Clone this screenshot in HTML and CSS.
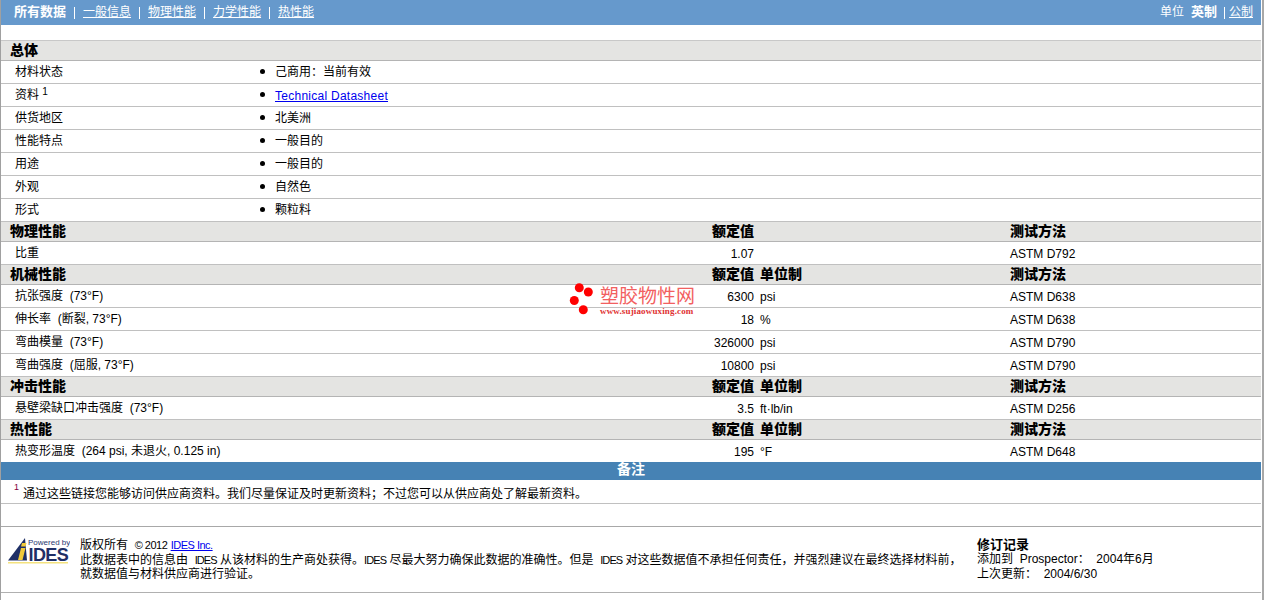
FILE: index.html
```html
<!DOCTYPE html>
<html lang="zh">
<head>
<meta charset="utf-8">
<title>塑胶物性</title>
<link rel="stylesheet" href="styles.css">
</head>
<body>
<div class="page">
  <nav class="topbar">
    <div class="tabs">
      <b>所有数据</b><i class="sep"></i><a href="#">一般信息</a><i class="sep"></i><a href="#">物理性能</a><i class="sep"></i><a href="#">力学性能</a><i class="sep"></i><a href="#">热性能</a>
    </div>
    <div class="units"><span>单位</span><b>英制</b><i class="sep"></i><a href="#">公制</a></div>
  </nav>
  <div class="gap"></div>

  <div class="head"><b class="c1">总体</b></div>
  <div class="row"><span class="c1 ind">材料状态</span><span class="bullet">己商用：当前有效</span></div>
  <div class="row"><span class="c1 ind">资料 <sup>1</sup></span><span class="bullet"><a href="#" class="link wide">Technical Datasheet</a></span></div>
  <div class="row"><span class="c1 ind">供货地区</span><span class="bullet">北美洲</span></div>
  <div class="row"><span class="c1 ind">性能特点</span><span class="bullet">一般目的</span></div>
  <div class="row"><span class="c1 ind">用途</span><span class="bullet">一般目的</span></div>
  <div class="row"><span class="c1 ind">外观</span><span class="bullet">自然色</span></div>
  <div class="row"><span class="c1 ind">形式</span><span class="bullet">颗粒料</span></div>

  <div class="head"><b class="c1">物理性能</b><b class="val">额定值</b><b class="unit"></b><b class="method">测试方法</b></div>
  <div class="row"><span class="c1 ind">比重</span><span class="val">1.07</span><span class="unit"></span><span class="method">ASTM D792</span></div>

  <div class="head"><b class="c1">机械性能</b><b class="val">额定值</b><b class="unit">单位制</b><b class="method">测试方法</b></div>
  <div class="row"><span class="c1 ind">抗张强度&nbsp; (73°F)</span><span class="val">6300</span><span class="unit">psi</span><span class="method">ASTM D638</span></div>
  <div class="row"><span class="c1 ind">伸长率&nbsp; (断裂, 73°F)</span><span class="val">18</span><span class="unit">%</span><span class="method">ASTM D638</span></div>
  <div class="row"><span class="c1 ind">弯曲模量&nbsp; (73°F)</span><span class="val">326000</span><span class="unit">psi</span><span class="method">ASTM D790</span></div>
  <div class="row"><span class="c1 ind">弯曲强度&nbsp; (屈服, 73°F)</span><span class="val">10800</span><span class="unit">psi</span><span class="method">ASTM D790</span></div>

  <div class="head"><b class="c1">冲击性能</b><b class="val">额定值</b><b class="unit">单位制</b><b class="method">测试方法</b></div>
  <div class="row"><span class="c1 ind">悬壁梁缺口冲击强度&nbsp; (73°F)</span><span class="val">3.5</span><span class="unit">ft·lb/in</span><span class="method">ASTM D256</span></div>

  <div class="head"><b class="c1">热性能</b><b class="val">额定值</b><b class="unit">单位制</b><b class="method">测试方法</b></div>
  <div class="row last"><span class="c1 ind">热变形温度&nbsp; (264 psi, 未退火, 0.125 in)</span><span class="val">195</span><span class="unit">°F</span><span class="method">ASTM D648</span></div>

  <div class="notes-title">备注</div>
  <div class="note"><sup class="mark">1</sup><span>通过这些链接您能够访问供应商资料。我们尽量保证及时更新资料；不过您可以从供应商处了解最新资料。</span></div>
  <div class="spacer"></div>

  <footer class="footer">
    <svg class="logo" width="62" height="28" viewBox="0 0 62 28" role="img" aria-label="Powered by IDES">
      <path d="M0 23.500 L17 1 L19 23.500 Z" fill="#1f2f66"/>
      <path d="M14 6 h4.500 l-1 3.500 h-4.500 Z M13 11 h4.500 l-3 12 h-4.500 Z" fill="#f0c93a"/>
      <rect x="0" y="25" width="60" height="1.500" fill="#f4e27e"/>
      <text x="20" y="8" class="logo-small">Powered by</text>
      <text x="20.500" y="24" class="logo-big">IDES</text>
    </svg>
    <div class="legal">
      <div>版权所有 &nbsp;<span class="co">© 2012</span> <a href="#" class="link co">IDES Inc.</a></div>
      <div>此数据表中的信息由 &nbsp;<span class="ides">IDES</span> 从该材料的生产商处获得。<span class="ides">IDES</span> 尽最大努力确保此数据的准确性。但是 &nbsp;<span class="ides">IDES</span> 对这些数据值不承担任何责任，并强烈建议在最终选择材料前，</div>
      <div>就数据值与材料供应商进行验证。</div>
    </div>
    <div class="history">
      <b>修订记录</b>
      <div>添加到 &nbsp;Prospector： &nbsp;2004年6月</div>
      <div>上次更新： &nbsp;2004/6/30</div>
    </div>
  </footer>

  <div class="watermark">
    <svg class="wm-dots" width="25" height="32" viewBox="0 0 25 32">
      <circle cx="10.300" cy="4.800" r="4.500"/><circle cx="19.300" cy="9" r="4.500"/><circle cx="5.300" cy="17.500" r="4.500"/><circle cx="14.300" cy="26.800" r="4.500"/>
    </svg>
    <div class="wm-text"><div class="wm-cn">塑胶物性网</div><div class="wm-url">www.sujiaowuxing.com</div></div>
  </div>
</div>
</body>
</html>
```
FILE: styles.css
```css
* { box-sizing: border-box; }
html, body { margin: 0; padding: 0; background: #fff; }
body {
  font-family: "Liberation Sans", "Noto Sans CJK SC", sans-serif;
  font-size: 12px;
  color: #000;
  overflow: hidden;
}
.page {
  position: relative;
  width: 1264px;
  height: 600px;
  border-left: 1px solid #a0a0a0;
  border-right: 2px solid #a8a8a8;
  padding-right: 1px;
  overflow: hidden;
}
a { color: inherit; }
.link { color: #0000ee; }
.wide { letter-spacing: .26px; position: relative; top: 1px; }
.topbar {
  height: 25px;
  background: #6699cc;
  color: #fff;
  display: flex;
  justify-content: space-between;
  align-items: center;
  padding: 0 8px 0 13px;
  line-height: 15px;
}
.tabs, .units { display: flex; align-items: center; }
.topbar b { font-size: 13px; margin-bottom: 2px; }
.sep { display: inline-block; width: 1px; height: 12px; background: #fff; margin: 0 8px; }
.units b { margin-left: 7px; }
.units .sep { margin: 0 4px 0 7px; }
.gap { height: 15px; }
.head {
  display: flex;
  align-items: center;
  height: 20px;
  padding-bottom: 2px;
  background: #e4e4e2;
  border-bottom: 1px solid #b4b4b4;
  font-size: 14px;
  line-height: 16px;
  font-weight: bold;
}
.gap + .head { height: 21px; border-top: 1px solid #c8c8c8; }
.row {
  display: flex;
  align-items: center;
  height: 23px;
  border-bottom: 1px solid #c0c0c0;
  line-height: 16px;
  padding-bottom: 1px;
}
.row.last { height: 22px; border-bottom: 0; }
.row .val, .row .unit, .row .method { padding-top: 2px; }
.c1 { width: 254px; padding-left: 9px; flex: none; }
.ind { padding-left: 14px; white-space: nowrap; }
sup { font-size: 10px; line-height: 0; vertical-align: 4px; }
.bullet { display: flex; align-items: center; padding-left: 5px; }
.bullet::before { content: ""; width: 5px; height: 5px; border-radius: 50%; background: #000; margin-right: 10px; }
.val { width: 499px; text-align: right; flex: none; }
.unit { width: 256px; padding-left: 6px; flex: none; }
.method { flex: none; }
.notes-title {
  height: 18px;
  background: #4682b4;
  color: #fff;
  font-weight: bold;
  font-size: 14px;
  line-height: 15px;
  text-align: center;
}
.note {
  height: 24px;
  padding: 6px 0 0 13px;
  border-bottom: 1px solid #c0c0c0;
  display: flex;
  align-items: flex-start;
  line-height: 16px;
}
.mark { font-size: 9px; color: #800040; line-height: 1; vertical-align: baseline; margin: -3px 4px 0 0; }
.spacer { height: 23px; border-bottom: 1px solid #a8a8a8; }
.footer {
  display: flex;
  height: 66px;
  border-bottom: 1px solid #b0b0b0;
  padding-top: 10px;
  line-height: 14.5px;
}
.logo { flex: none; margin: 0 0 0 7px; }
.logo-small { font: 8px "Liberation Sans", sans-serif; fill: #2b3a70; }
.logo-big { font: bold 18px "Liberation Sans", sans-serif; fill: #1f2f66; letter-spacing: -.6px; }
.legal { width: 897px; margin-left: 10px; flex: none; padding-top: 1px; }
.ides { font-size: 11px; letter-spacing: -.9px; }
.co { font-size: 11px; letter-spacing: -.5px; }
.history { padding-top: .5px; }
.history b { display: block; font-size: 13px; }
.watermark {
  position: absolute;
  left: 568px;
  top: 283px;
  display: flex;
  gap: 6px;
}
.wm-dots { fill: #f00; }
.wm-text { padding-top: 3px; }
.wm-cn { font-size: 19px; line-height: 21px; color: #f26060; }
.wm-url { font: bold 9px/9px "Liberation Serif", serif; color: #e03030; letter-spacing: .15px; }
```
